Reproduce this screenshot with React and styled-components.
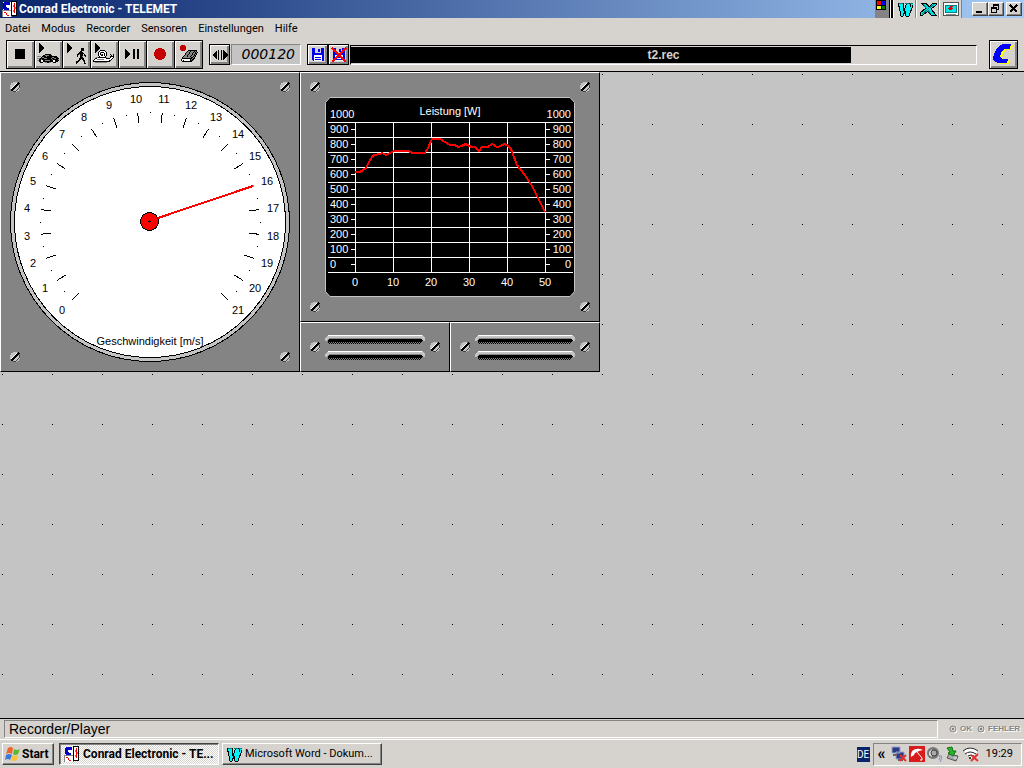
import React from "react";
import styled, { createGlobalStyle, css } from "styled-components";

const FACE = "#d6d3ce";
const SHADE = "#848484";
const SILVER = "#c4c4c4";

const TICKS = Array.from({ length: 22 }, (_, i) => i);
const WATTS = [900, 800, 700, 600, 500, 400, 300, 200, 100, 0];
const SECONDS = [0, 10, 20, 30, 40, 50];
const POWER =
  "55,100 60,100 63,98 66,96 70,88 74,83 80,82 82,81 86,83 90,81 94,79 109,79 112,81 125,81 128,76 132,67 140,67 150,73 155,73 158,75 162,74 165,72 168,73 171,75 175,75 179,79 182,75 188,75 192,72 197,75 201,74 204,72 207,73 211,77 217,93 224,102 231,112 245,140";

function polar(r, value) {
  const a = ((225 - (value * 270) / 21) * Math.PI) / 180;
  return [150 + r * Math.cos(a), 150 - r * Math.sin(a)];
}

const INK = { "#": "#000", g: "#848484", w: "#fff" };

function Bitmap({ x, y, rows }) {
  return rows.flatMap((row, j) =>
    [...row].map((c, i) =>
      INK[c] ? <rect key={`${i}-${j}`} x={x + i} y={y + j} width="1" height="1" fill={INK[c]} /> : null
    )
  );
}

const CAR = [
  "........######........",
  "......##gggg###.......",
  "gggg.####g##########..",
  "....#gg########gg####.",
  "ggg####ggg####g##gg###",
  "..##g##########g#####g",
  "gg##ww##ggggg###ww####",
  "..##ww##########ww###.",
  "...###..gg##gg..###...",
];
const WALKER = [
  ".....###...",
  ".....###...",
  ".....###...",
  "....##.....",
  "...####....",
  "..######...",
  ".##g###.#..",
  ".#..###.##.",
  ".#..##g..#.",
  "....###....",
  "...#####...",
  "...##.##...",
  "..##...##..",
  "###....g#..",
  "##......#..",
  "#.......##.",
];
const SNAIL = [
  ".......#####..........",
  "......#wwwww#.........",
  ".....#wg###ww#........",
  ".....#w#www#w#........",
  ".....#w#g#w#w#...#..#.",
  ".....#ww##w#w#....#.#.",
  "......#wwwww#....####.",
  "...gg########g...#ww#.",
  "..##wwwwwwwww####ww#..",
  ".#wwgggggggwwwwwww#...",
  "#wwwwwwwwwwwwwww##....",
  "#################.....",
  "..gggggggggggg........",
];
const ERASER = [
  ".......#########.",
  "......#gg#ggg#g#.",
  ".....#gg#ggg#g#g#",
  "....#ggg#gg#gg##.",
  "....#gg#ggg#g#g#.",
  "...#gg#ggg#gg##..",
  "..#ggg#gg#gg#g#..",
  ".#gggggggg##g#...",
  ".##########g##...",
  "#wwwwwwww#g##....",
  "#w#wwwwww###.....",
  ".##########......",
];

function AppLogo() {
  return (
    <svg width="16" height="16" viewBox="0 0 16 16" shapeRendering="crispEdges">
      <rect x="1" y="1" width="8" height="8" fill="#fff" />
      <path d="M8 2H4L2 4v2l2 2h3" fill="none" stroke="#0000c8" strokeWidth="3" />
      <path d="M9 3v2M4 9h5V7" fill="none" stroke="#ff0" />
      <path d="M0 9h9v7H0z" fill="#fff" stroke="#848484" />
      <path d="M2 11l2 1 1 2 2 1" fill="none" stroke="#f00" />
      <path d="M9.500 0.500h5v14h-5z" fill="#fff" stroke="#000" />
      <path d="M12 2v10" stroke="#f00" />
      <path d="M11 4v2M11 9v2M13 6v2" stroke="#848484" />
    </svg>
  );
}

function WordLogo() {
  return (
    <svg width="16" height="16" viewBox="0 0 16 16" shapeRendering="crispEdges">
      <path d="M1 2h5v2l1 6 2-6V2h4l0 2 0 2 1-4h2v2l-4 11h-3l-1-5-2 5H4L2 5H1z" fill="#00f3f7" stroke="#000" />
      <path d="M2 2h4M8 2h4M13 2h3" stroke="#008284" />
    </svg>
  );
}

function ExcelLogo() {
  return (
    <svg width="18" height="16" viewBox="0 0 18 16" shapeRendering="crispEdges">
      <path d="M2 2h5l3 4 4-4h3v2l-5 4 5 6h-5l-3-4-5 4H1v-2l6-5z" fill="#00e0e4" stroke="#000" />
      <path d="M4 3l8 10M15 3L3 13" stroke="#008284" />
    </svg>
  );
}

function SlideLogo() {
  return (
    <svg width="18" height="16" viewBox="0 0 18 16" shapeRendering="crispEdges">
      <path d="M1 1h15v13H1z" fill="#fff" stroke="#555" />
      <path d="M3 4h11v7H3z" fill="#00e7e7" stroke="#008284" />
      <path d="M11 5H8L6 7l1 2h3l1-2H9z" fill="#e00000" />
      <path d="M4 13h10" stroke="#848484" />
    </svg>
  );
}

function OfficeSquares() {
  return (
    <svg width="14" height="18" viewBox="0 0 14 18" shapeRendering="crispEdges">
      <rect width="14" height="18" fill="#848484" />
      <rect x="1" width="10" height="10" fill="#000" />
      <rect x="2" y="1" width="4" height="4" fill="#f00" />
      <rect x="7" y="1" width="3" height="4" fill="#00f" />
      <rect x="2" y="6" width="4" height="3" fill="#ff0" />
      <rect x="7" y="6" width="3" height="3" fill="#008200" />
    </svg>
  );
}

function ToolGlyph({ children }) {
  return (
    <svg width="27" height="27" viewBox="0 0 27 27" shapeRendering="crispEdges">
      {children}
    </svg>
  );
}

const Cue = () => <path d="M4 2l5 5-5 5z" fill="#000" />;

const TOOLS = [
  {
    name: "Stop",
    art: <rect x="8" y="8" width="10" height="10" fill="#000" />,
  },
  {
    name: "Schnell",
    art: <><Cue /><Bitmap x={2} y={13} rows={CAR} /></>,
  },
  {
    name: "Normal",
    art: <><Cue /><Bitmap x={13} y={7} rows={WALKER} /></>,
  },
  {
    name: "Langsam",
    art: <><Cue /><Bitmap x={2} y={9} rows={SNAIL} /></>,
  },
  {
    name: "Pause",
    art: <path d="M6 8l6 5-6 5zM14 8h2v10h-2zM18 8h2v10h-2z" fill="#000" />,
  },
  {
    name: "Aufnahme",
    art: <circle cx="13" cy="13" r="6" fill="#c60000" />,
  },
  {
    name: "Löschen",
    art: <><circle cx="8" cy="7" r="3" fill="#c60000" /><Bitmap x={6} y={9} rows={ERASER} /></>,
  },
];

function Disk({ crossed }) {
  return (
    <svg width="16" height="16" viewBox="0 0 16 16" shapeRendering="crispEdges">
      <path d="M2 1h12v13H3l-1-1z" fill="#0000f0" />
      <rect x="5" y="1" width="6" height="5" fill="#d6d3ce" />
      <rect x="8" y="2" width="2" height="3" fill="#0000f0" />
      <rect x="4" y="8" width="8" height="6" fill="#fff" />
      <path d="M5 10.500h6M5 12.500h6" stroke="#0000f0" />
      {crossed && <path d="M1 1l14 14M15 1L1 15" stroke="#f00" strokeWidth="2" />}
    </svg>
  );
}

function ConradLogo() {
  return (
    <svg width="27" height="27" viewBox="0 0 27 27" shapeRendering="crispEdges">
      <g fill="#ff0" transform="translate(2 1)">
        <path d="M21 3h-8l-4 2-3 4-2 4-1 5 2 3 4 1h8l1-4h-6l-2-2 1-4 3-4h6z" />
      </g>
      <path d="M21 3h-8l-4 2-3 4-2 4-1 5 2 3 4 1h8l1-4h-6l-2-2 1-4 3-4h6z" fill="#00f" />
    </svg>
  );
}

function Screw() {
  return (
    <svg width="10" height="10" viewBox="0 0 10 10" shapeRendering="crispEdges">
      <circle cx="5" cy="5" r="5" fill="#c4c4c4" />
      <path d="M9 3v3L6 9H3" fill="none" stroke="#424242" />
      <path d="M1 7l6-6" stroke="#fff" />
      <path d="M1 9l8-8" stroke="#000" strokeWidth="2" />
    </svg>
  );
}

function Dial() {
  return (
    <Panel $area="dial">
      <Face viewBox="0 0 298 298">
        <g transform="translate(-1 -1)">
          <g shapeRendering="crispEdges">
            <circle cx="150" cy="150" r="139.500" fill="#c4c4c4" stroke="#000" />
            <circle cx="150" cy="150" r="135.500" fill="#fff" stroke="#000" />
            {TICKS.map((n) => {
              const [x1, y1] = polar(110, n);
              const [x2, y2] = polar(100, n);
              return <line key={n} x1={x1} y1={y1} x2={x2} y2={y2} stroke="#000" />;
            })}
            {TICKS.slice(0, 21).map((n) => {
              const [x, y] = polar(110, n + 0.5);
              return <rect key={n} x={Math.round(x)} y={Math.round(y)} width="1" height="1" />;
            })}
            <path d="M246 116l8-2" stroke="#0ff" strokeWidth="2" />
            <path d="M158 146L253 114" stroke="#f00" strokeWidth="2" />
            <circle cx="149.500" cy="149.500" r="9" fill="#f00" stroke="#000" />
            <path d="M149 148v3M148 149h3" stroke="#000" />
          </g>
          {TICKS.map((n) => {
            const [x, y] = polar(124, n);
            return (
              <Label key={n} x={Math.round(x)} y={Math.round(y) + 4} textAnchor="middle">
                {n}
              </Label>
            );
          })}
          <Label x="150" y="273" textAnchor="middle">
            Geschwindigkeit [m/s]
          </Label>
        </g>
      </Face>
      <Screws>
        <Screw />
        <Screw />
        <Screw />
        <Screw />
      </Screws>
    </Panel>
  );
}

function Chart() {
  return (
    <Panel $area="chart">
      <Face viewBox="0 0 298 248">
        <g transform="translate(-1 -1)">
          <path d="M30 25.500h240l4.500 5v189l-4.500 5H30l-4.500-5v-189z" fill="#000" stroke="#c4c4c4" />
          <g stroke="#fff" shapeRendering="crispEdges">
            {WATTS.concat(-100).map((w, i) => (
              <line key={w} x1="28" x2="273" y1={50.5 + i * 15} y2={50.5 + i * 15} />
            ))}
            {SECONDS.map((s, i) => (
              <line key={s} x1={55.5 + i * 38} x2={55.5 + i * 38} y1="50" y2="200" />
            ))}
            {WATTS.map((w, i) => (
              <path key={w} d={`M51 ${57.5 + i * 15}h4M246 ${57.5 + i * 15}h4`} />
            ))}
          </g>
          <polyline points={POWER} fill="none" stroke="#f00" strokeWidth="2" shapeRendering="crispEdges" />
          <Label $light x="150" y="43" textAnchor="middle">Leistung [W]</Label>
          <Label $light x="30" y="46">1000</Label>
          <Label $light x="271" y="46" textAnchor="end">1000</Label>
          {WATTS.map((w, i) => (
            <React.Fragment key={w}>
              <Label $light x="30" y={61 + i * 15}>{w}</Label>
              <Label $light x="271" y={61 + i * 15} textAnchor="end">{w}</Label>
            </React.Fragment>
          ))}
          {SECONDS.map((s, i) => (
            <Label $light key={s} x={55 + i * 38} y="214" textAnchor="middle">{s}</Label>
          ))}
        </g>
      </Face>
      <Screws>
        <Screw />
        <Screw />
        <Screw />
        <Screw />
      </Screws>
    </Panel>
  );
}

function Slot() {
  return (
    <svg width="100" height="9" viewBox="0 0 100 9" shapeRendering="crispEdges">
      <path d="M0 3l3-3h94l3 3v3h-3l-1-3H4L2 6H0z" fill="#c4c4c4" />
      <path d="M3 0.500h94" stroke="#fff" />
      <path d="M4 4h92l2 2-2 1H4L2 6z" fill="#000" />
      <path d="M3 7.500h94" stroke="#000" strokeDasharray="1 1" />
      <path d="M4 8.500h92" stroke="#000" strokeDasharray="1 1" />
    </svg>
  );
}

function Vent({ area }) {
  return (
    <VentPanel $area={area}>
      <Screw />
      <Slots>
        <Slot />
        <Slot />
      </Slots>
      <Screw />
    </VentPanel>
  );
}

function TitleBar() {
  return (
    <Title>
      <AppLogo />
      <TitleText>Conrad Electronic - TELEMET</TitleText>
      <OfficeBar>
        <OfficeSquares />
        <OfficeGrip />
        <OfficeButton aria-label="Word"><WordLogo /></OfficeButton>
        <OfficeButton aria-label="Excel"><ExcelLogo /></OfficeButton>
        <OfficeButton aria-label="PowerPoint"><SlideLogo /></OfficeButton>
      </OfficeBar>
      <WindowButtons>
        <WindowButton aria-label="Minimieren">
          <svg width="12" height="10" viewBox="0 0 12 10" shapeRendering="crispEdges">
            <path d="M2 8h6" stroke="#000" strokeWidth="2" />
          </svg>
        </WindowButton>
        <WindowButton aria-label="Wiederherstellen">
          <svg width="12" height="10" viewBox="0 0 12 10" shapeRendering="crispEdges">
            <path d="M3 0h6v2H3zM3 2h1v1H3zM8 2h1v4H8zM7 5h1v1H7zM1 3h6v2H1zM1 5h1v4H1zM6 5h1v4H6zM2 8h4v1H2z" fill="#000" />
          </svg>
        </WindowButton>
        <WindowButton $apart aria-label="Schließen">
          <svg width="12" height="10" viewBox="0 0 12 10" shapeRendering="crispEdges">
            <path d="M2 1l7 7M9 1L2 8" stroke="#000" strokeWidth="2" />
          </svg>
        </WindowButton>
      </WindowButtons>
    </Title>
  );
}

function Toolbar() {
  return (
    <Tools>
      <ToolGroup>
        {TOOLS.map((t) => (
          <ToolButton key={t.name} aria-label={t.name}>
            <ToolGlyph>{t.art}</ToolGlyph>
          </ToolButton>
        ))}
      </ToolGroup>
      <Counter>
        <SmallButton aria-label="Spulen">
          <svg width="16" height="12" viewBox="0 0 16 12" shapeRendering="crispEdges">
            <path d="M5 1v10L0 6zM11 1v10l5-5zM6 1h1v10H6zM9 1h1v10H9z" fill="#000" />
          </svg>
        </SmallButton>
        <Lcd>000120</Lcd>
      </Counter>
      <Player>
        <Disks>
          <SmallButton aria-label="Speichern"><Disk /></SmallButton>
          <SmallButton aria-label="Verwerfen"><Disk crossed /></SmallButton>
        </Disks>
        <Track role="progressbar" aria-label="Wiedergabe" aria-valuenow={80}>
          <Fill style={{ width: "80%" }} />
          <TrackText>t2.rec</TrackText>
        </Track>
      </Player>
      <LogoButton aria-label="Conrad"><ConradLogo /></LogoButton>
    </Tools>
  );
}

function Flag() {
  return (
    <svg width="16" height="16" viewBox="0 0 16 16">
      <path d="M3 2q3-2 5 0L7 8q-3-2-6 0z" fill="#f0642c" />
      <path d="M9 3q3 2 6 0l-2 5q-3 2-5 0z" fill="#5cb82e" />
      <path d="M1 9q3-2 6 0l-2 5q-2-2-5 0z" fill="#3c78dc" />
      <path d="M8 9q2 2 5 0l-1 5q-3 2-6 0z" fill="#fcc430" />
    </svg>
  );
}

function TrayIcons() {
  return (
    <Icons>
      <svg width="16" height="16" viewBox="0 0 16 16">
        <path d="M1 1h8v6H1zM5 6h8v7H5z" fill="#2a3a86" stroke="#9aa4c8" />
        <path d="M2 9h4M7 14h5" stroke="#666" strokeWidth="2" />
        <path d="M9 9l6 6M15 9l-6 6" stroke="#e43030" strokeWidth="2" />
      </svg>
      <svg width="16" height="16" viewBox="0 0 16 16">
        <rect width="16" height="16" fill="#d81c1c" />
        <path d="M2 11C1 3 8 1 14 4L10 5 6 7 5 9z" fill="#fff" />
        <path d="M8 6l5 6q1 3-2 2" fill="none" stroke="#fff" />
      </svg>
      <svg width="16" height="16" viewBox="0 0 16 16">
        <circle cx="6" cy="7" r="6" fill="#777" />
        <path d="M2 6l3-3v8L2 9z" fill="#ddd" />
        <circle cx="7" cy="7" r="3" fill="#aaa" stroke="#444" />
        <path d="M12 9q2 2 0 5M14 9q2 3-1 7" fill="none" stroke="#7c90cc" />
      </svg>
      <svg width="16" height="16" viewBox="0 0 16 16">
        <path d="M4 8l9 2-2 5-9-3z" fill="#aaa" stroke="#555" />
        <path d="M2 2l5-1 1 4 3 0-3 5-5-3 2-1z" fill="#28b428" stroke="#147014" />
        <path d="M9 12h3" stroke="#eee" />
      </svg>
      <svg width="16" height="16" viewBox="0 0 16 16">
        <path d="M1 5q7-7 14 0L8 13z" fill="#fff" />
        <path d="M0 5q7-6 15 0M2 8q5-4 11 0M5 10q3-2 6 0" fill="none" stroke="#222" />
        <circle cx="7" cy="12" r="1" fill="#000" />
        <path d="M8 9l7 6M15 8l-7 7" stroke="#e43030" strokeWidth="2" />
      </svg>
    </Icons>
  );
}

function Led() {
  return (
    <svg width="9" height="9" viewBox="0 0 9 9">
      <circle cx="5" cy="5" r="3" fill="none" stroke="#fff" />
      <circle cx="4" cy="4" r="3" fill="#d6d3ce" stroke="#848484" />
      <path d="M3 3l2 2M5 3L3 5" stroke="#848484" />
    </svg>
  );
}

export default function App() {
  return (
    <>
      <Global />
      <Desktop>
        <TitleBar />
        <Menu>
          {["Datei", "Modus", "Recorder", "Sensoren", "Einstellungen", "Hilfe"].map((m) => (
            <MenuItem key={m}>{m}</MenuItem>
          ))}
        </Menu>
        <Toolbar />
        <Canvas>
          <Instruments>
            <Dial />
            <Chart />
            <Vent area="left" />
            <Vent area="right" />
          </Instruments>
        </Canvas>
        <Status>
          <StatusText>Recorder/Player</StatusText>
          <Lights>
            <Light><Led />OK</Light>
            <Light><Led />FEHLER</Light>
          </Lights>
        </Status>
        <Taskbar>
          <StartButton><Flag />Start</StartButton>
          <TaskButton $active><AppLogo />Conrad Electronic - TE...</TaskButton>
          <TaskButton><WordLogo />Microsoft Word - Dokum...</TaskButton>
          <Language>DE</Language>
          <Tray>
            <Chevron>«</Chevron>
            <TrayIcons />
            <Clock>19:29</Clock>
          </Tray>
        </Taskbar>
      </Desktop>
    </>
  );
}

const Global = createGlobalStyle`
  * {
    box-sizing: border-box;
  }
  body {
    margin: 0;
    background: ${FACE};
    color: #000;
    font: 11px/14px Roboto, "Liberation Sans", sans-serif;
  }
  button {
    margin: 0;
    padding: 0;
    color: inherit;
    font: inherit;
    background: ${FACE};
    border: 0;
    border-radius: 0;
  }
  svg {
    display: block;
    flex: none;
  }
`;

const raised = css`
  border: 1px solid;
  border-color: #fff #424242 #424242 #fff;
  box-shadow: inset -1px -1px ${SHADE};
`;

const Desktop = styled.div`
  min-height: 100vh;
  display: flex;
  flex-direction: column;
`;
const Title = styled.header`
  height: 18px;
  display: flex;
  align-items: center;
  padding: 0 2px;
  background: linear-gradient(90deg, #08246b, #a5cbf7);
`;
const TitleText = styled.h1`
  flex: 1;
  margin: 0 0 0 1px;
  color: #fff;
  font-size: 12px;
  line-height: 18px;
  font-weight: 700;
  white-space: nowrap;
`;
const OfficeBar = styled.div`
  display: flex;
  height: 18px;
`;
const OfficeGrip = styled.span`
  width: 4px;
  background: #fff;
  border-left: 1px solid #000;
  border-right: 2px solid #000;
`;
const OfficeButton = styled.button`
  width: 23px;
  height: 18px;
  display: flex;
  justify-content: center;
  align-items: center;
  border-left: 1px solid #fff;
  border-right: 1px solid ${SHADE};
`;
const WindowButtons = styled.div`
  display: flex;
  margin-left: 10px;
`;
const WindowButton = styled.button`
  ${raised}
  width: 16px;
  height: 14px;
  margin-left: ${({ $apart }) => ($apart ? "2px" : 0)};
  display: flex;
  justify-content: center;
  align-items: center;
`;
const Menu = styled.nav`
  height: 20px;
  display: flex;
  align-items: center;
  gap: 11px;
  padding: 2px 5px 0;
`;
const MenuItem = styled.button`
  line-height: 18px;
`;
const Tools = styled.div`
  height: 34px;
  display: flex;
  align-items: center;
  gap: 6px;
  padding: 0 6px;
  border-bottom: 1px solid #000;
`;
const ToolGroup = styled.div`
  display: flex;
  gap: 1px;
  padding: 1px;
  background: #000;
`;
const ToolButton = styled.button`
  width: 27px;
  height: 27px;
  box-shadow: inset 1px 1px #fff, inset -2px -2px ${SHADE};
`;
const Counter = styled.div`
  display: flex;
  gap: 1px;
`;
const SmallButton = styled.button`
  width: 21px;
  height: 21px;
  display: flex;
  justify-content: center;
  align-items: center;
  border: 1px solid #000;
  box-shadow: inset 1px 1px #fff, inset -2px -2px ${SHADE};
`;
const Lcd = styled.output`
  width: 70px;
  height: 21px;
  padding-right: 5px;
  background: ${SILVER};
  border: 1px solid;
  border-color: ${SHADE} #fff #fff ${SHADE};
  color: #000;
  text-align: right;
  font: italic 200 14px/19px "DejaVu Sans", sans-serif;
  white-space: nowrap;
`;
const Player = styled.div`
  flex: 1;
  display: flex;
  align-items: center;
  gap: 1px;
`;
const Disks = styled.div`
  display: flex;
`;
const Track = styled.div`
  flex: 1;
  height: 20px;
  display: grid;
  align-items: center;
  padding: 1px 0;
  border: 1px solid;
  border-color: #000 #fff #fff #000;
`;
const Fill = styled.div`
  grid-area: 1 / 1;
  height: 16px;
  background: #000;
`;
const TrackText = styled.span`
  grid-area: 1 / 1;
  color: ${FACE};
  font: bold 12px/16px "Liberation Sans", sans-serif;
  text-align: center;
`;
const LogoButton = styled(ToolButton)`
  width: 29px;
  height: 29px;
  margin-left: 6px;
  border: 1px solid #000;
`;
const Canvas = styled.main`
  flex: 1;
  background: conic-gradient(from 90deg at 49px 49px, #000 90deg, transparent 0) 3px 3px / 50px 50px ${SILVER};
  border-bottom: 1px solid #000;
`;
const Instruments = styled.div`
  display: grid;
  width: max-content;
  grid-template: "dial chart chart" 250px "dial left right" 50px / 300px 150px 150px;
`;
const Panel = styled.section`
  grid-area: ${({ $area }) => $area};
  display: grid;
  background: ${SHADE};
  border: 1px solid;
  border-color: #fff #000 #000 #fff;
`;
const Face = styled.svg`
  grid-area: 1 / 1;
  width: 100%;
`;
const Screws = styled.div`
  grid-area: 1 / 1;
  display: grid;
  grid-template-columns: auto auto;
  justify-content: space-between;
  align-content: space-between;
  padding: 9px;
`;
const VentPanel = styled(Panel)`
  display: flex;
  align-items: center;
  justify-content: space-between;
  padding: 0 9px;
`;
const Slots = styled.div`
  display: grid;
  gap: 7px;
`;
const Label = styled.text`
  fill: ${({ $light }) => ($light ? "#fff" : "#000")};
  font: 11px "Liberation Sans", sans-serif;
`;
const Status = styled.footer`
  height: 20px;
  display: flex;
  align-items: center;
  padding-left: 4px;
`;
const StatusText = styled.div`
  flex: 1;
  height: 18px;
  padding-left: 4px;
  border: 1px solid;
  border-color: ${SHADE} #fff #fff ${SHADE};
  font: 14px/17px "Liberation Sans", sans-serif;
`;
const Lights = styled.div`
  display: flex;
  gap: 5px;
  padding: 0 4px 0 11px;
`;
const Light = styled.span`
  display: flex;
  align-items: center;
  gap: 2px;
  color: ${SHADE};
  font: bold 8px/10px "Liberation Sans", sans-serif;
  text-shadow: 1px 1px #fff;
`;
const Taskbar = styled.div`
  height: 29px;
  display: flex;
  align-items: center;
  gap: 3px;
  padding: 0 2px;
  border-top: 1px solid #fff;
`;
const StartButton = styled.button`
  ${raised}
  width: 52px;
  height: 22px;
  margin-right: 2px;
  display: flex;
  align-items: center;
  gap: 1px;
  padding-left: 2px;
  font-size: 12px;
  font-weight: 700;
`;
const TaskButton = styled.button`
  ${raised}
  width: 160px;
  height: 22px;
  display: flex;
  align-items: center;
  gap: 3px;
  padding-left: 3px;
  white-space: nowrap;
  ${({ $active }) =>
    $active &&
    css`
      border-color: #424242 #fff #fff #424242;
      box-shadow: inset 1px 1px ${SHADE};
      padding-left: 4px;
      background: repeating-conic-gradient(#fff 0 90deg, ${FACE} 0 180deg) 0 0 / 2px 2px;
      font-size: 12px;
      font-weight: 700;
    `}
`;
const Language = styled.span`
  width: 13px;
  margin-left: auto;
  background: #08246b;
  color: #fff;
  font-size: 10px;
  line-height: 15px;
  text-align: center;
`;
const Tray = styled.div`
  height: 23px;
  display: flex;
  align-items: center;
  padding: 0 8px 0 4px;
  border: 1px solid;
  border-color: ${SHADE} #fff #fff ${SHADE};
`;
const Chevron = styled.span`
  width: 9px;
  margin-right: 4px;
  font-size: 16px;
  font-weight: 700;
`;
const Icons = styled.div`
  display: flex;
  gap: 2px;
`;
const Clock = styled.time`
  margin-left: 7px;
`;
